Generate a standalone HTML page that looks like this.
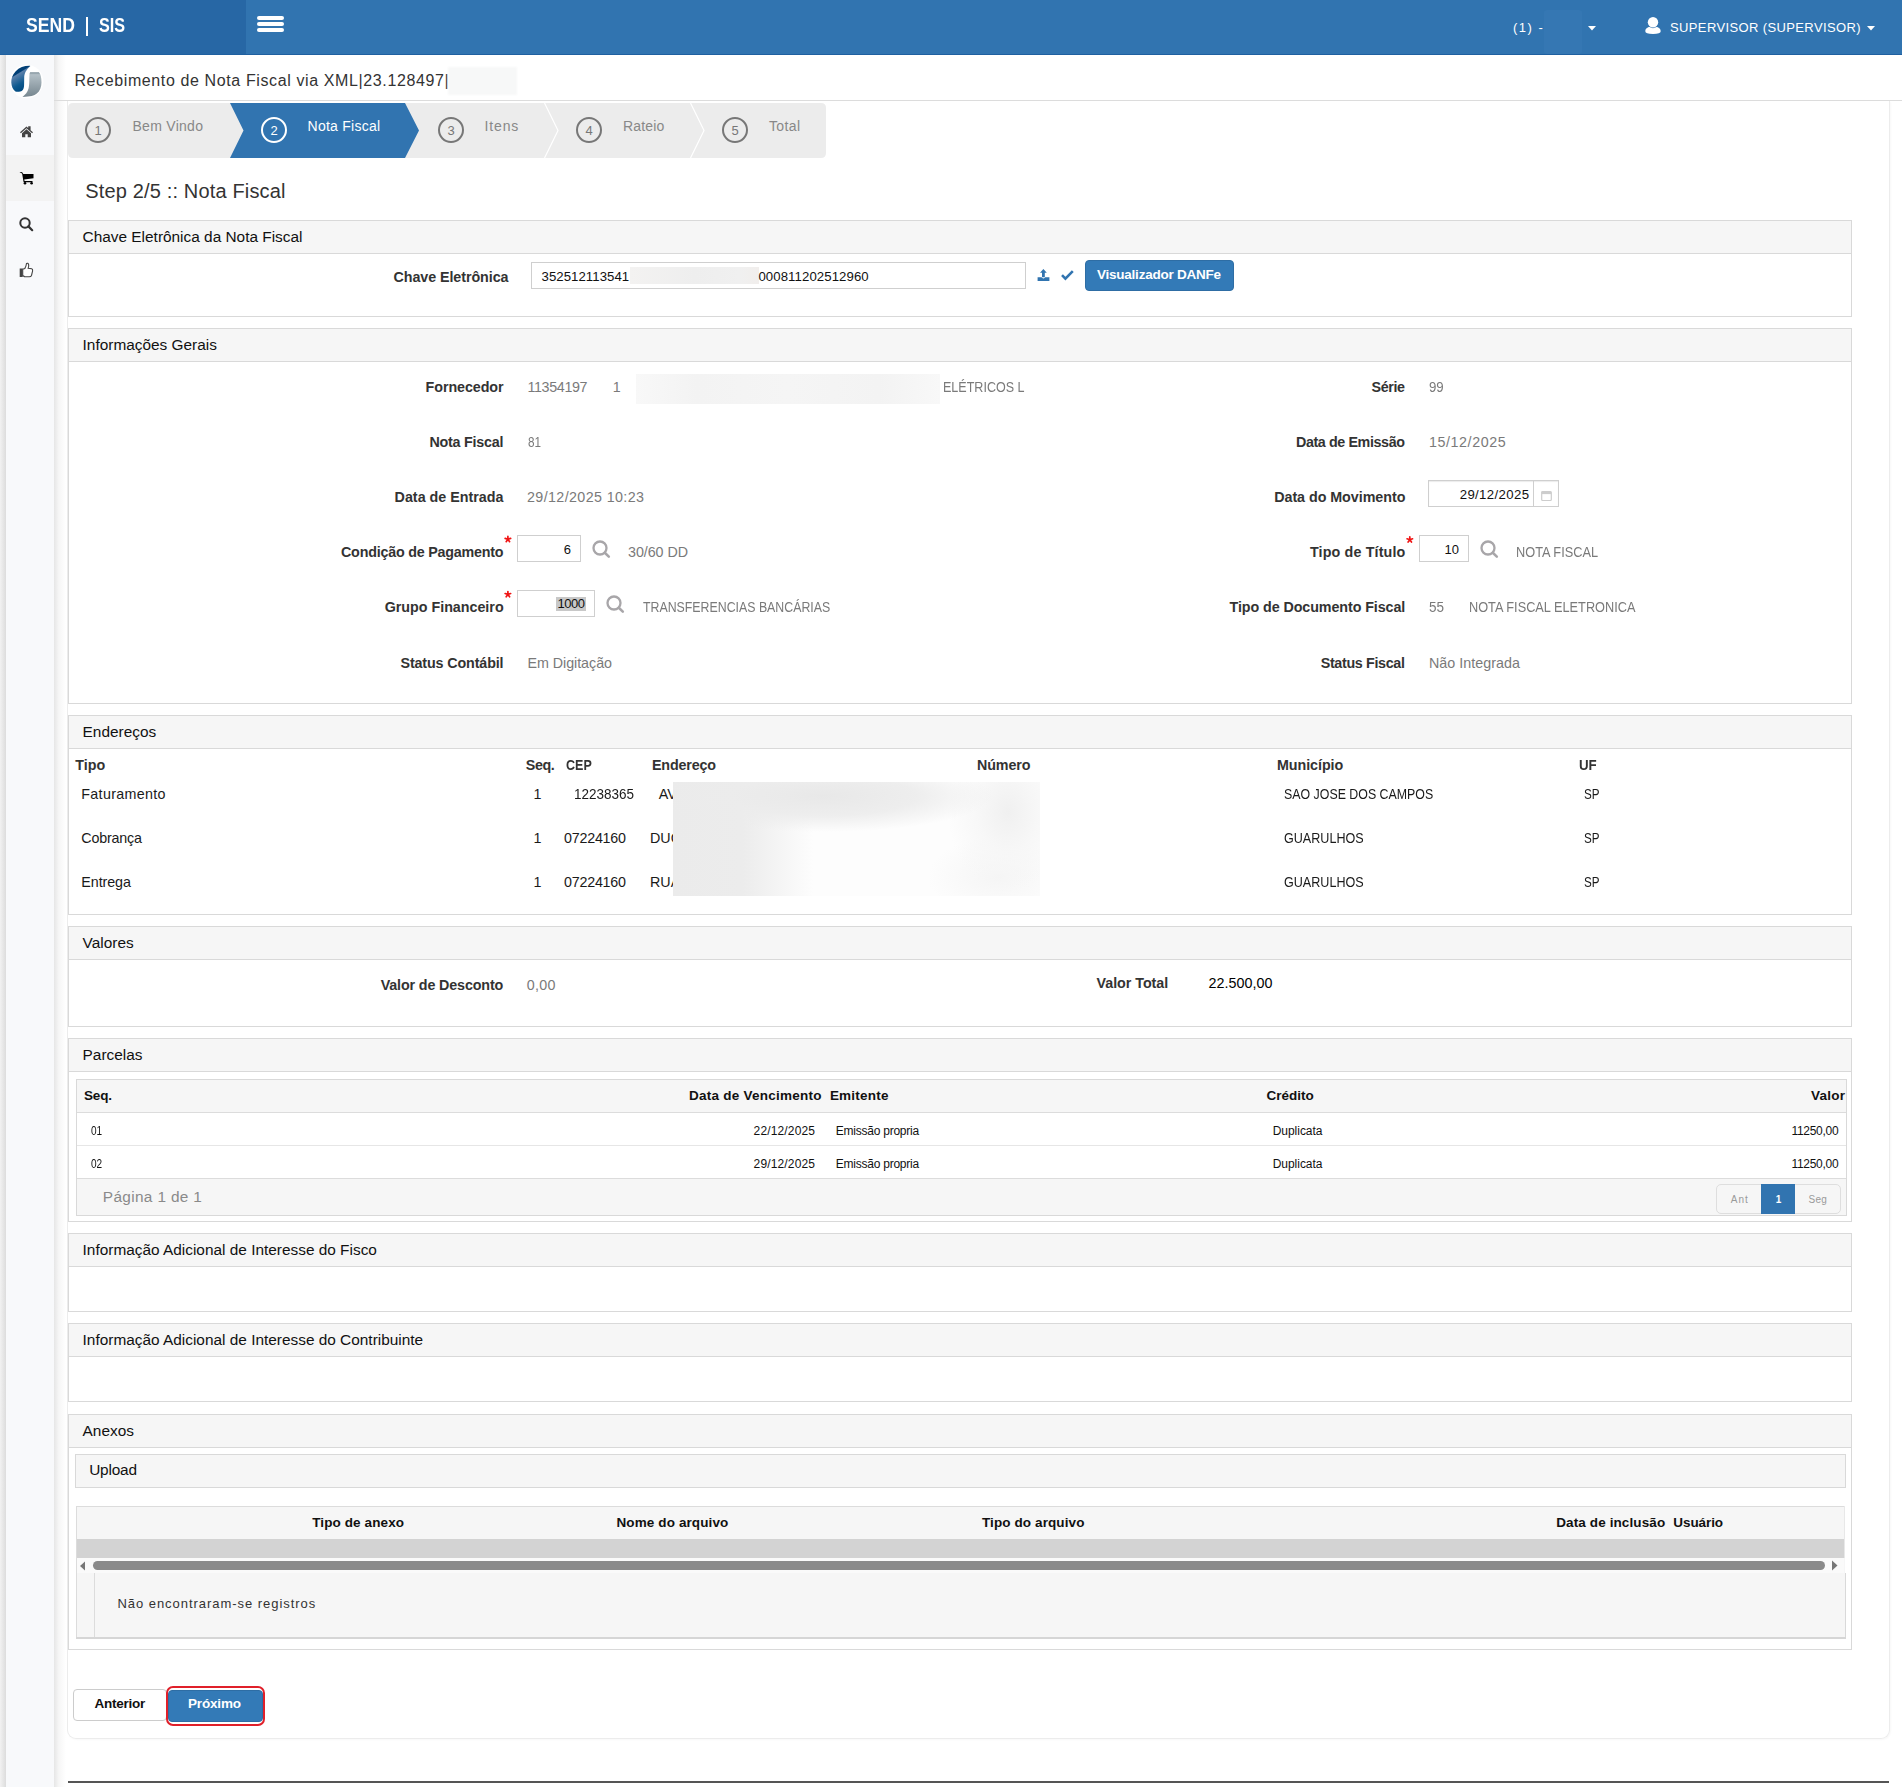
<!DOCTYPE html>
<html><head><meta charset="utf-8"><title>Recebimento de Nota Fiscal</title>
<style>
html,body{margin:0;padding:0;}
body{width:1902px;height:1787px;position:relative;overflow:hidden;background:#fff;font-family:"Liberation Sans",sans-serif;}
body div,body svg{position:absolute;}
.t{white-space:nowrap;}
</style></head><body>
<div style="left:0px;top:55px;width:6px;height:1732px;background:linear-gradient(to right,#f2f2f2,#dcdcdc);"></div>
<div style="left:6px;top:55px;width:48px;height:1732px;background:#f8f9fb;"></div>
<div style="left:6px;top:155px;width:48px;height:46px;background:#f3f3f3;"></div>
<div style="left:54px;top:55px;width:12px;height:1732px;background:linear-gradient(to right,#e6e6e6,#f6f6f6 40%,#ffffff);"></div>
<div style="left:54px;top:100px;width:1848px;height:1px;background:#dcdcdc;"></div>
<div style="left:67px;top:101px;width:1823px;height:1638px;border:1px solid #ececec;border-top:none;border-radius:0 0 9px 9px;box-sizing:border-box;box-shadow:1px 1px 2px rgba(0,0,0,0.03);"></div>
<div style="left:68px;top:1781px;width:1821px;height:2px;background:#555;"></div>
<div style="left:0px;top:0px;width:1902px;height:55px;background:#3174b0;"></div>
<div style="left:0px;top:0px;width:246px;height:55px;background:#2767a5;"></div>
<div style="left:0px;top:54px;width:1902px;height:1px;background:#1f60a0;"></div>
<div class="t" style="left:25.80px;top:14px;font-size:21px;line-height:21px;color:#fff;font-weight:bold;transform:scaleX(0.8377);transform-origin:0 0;">SEND</div>
<div style="left:85.6px;top:17px;width:2.4px;height:19px;background:#fff;"></div>
<div class="t" style="left:99.40px;top:14px;font-size:21px;line-height:21px;color:#fff;font-weight:bold;transform:scaleX(0.7705);transform-origin:0 0;">SIS</div>
<div style="left:257px;top:16px;width:27px;height:4px;background:#fff;border-radius:2px;"></div>
<div style="left:257px;top:22px;width:27px;height:4px;background:#fff;border-radius:2px;"></div>
<div style="left:257px;top:28px;width:27px;height:4px;background:#fff;border-radius:2px;"></div>
<div class="t" style="left:1513.00px;top:21px;font-size:13px;line-height:13px;color:#fff;letter-spacing:1.531px;">(1) -</div>
<div style="left:1544px;top:10px;width:38px;height:44px;background:#3577b3;border-radius:3px;"></div>
<svg style="left:1588px;top:26px" width="8" height="5"><path d="M0 0H8L4 4.5Z" fill="#fff"/></svg>
<svg style="left:1867px;top:26px" width="8" height="5"><path d="M0 0H8L4 4.5Z" fill="#fff"/></svg>
<svg style="left:1645px;top:17px" width="16" height="17"><circle cx="8" cy="5.2" r="5.2" fill="#fff"/><path d="M0.3 14.2C0.3 11.5 3 10.3 4.5 10.1Q8 12.3 11.5 10.1C13 10.3 15.7 11.5 15.7 14.2Q15.7 16.9 8 16.9Q0.3 16.9 0.3 14.2Z" fill="#fff"/></svg>
<div class="t" style="left:1670.00px;top:21px;font-size:13px;line-height:13px;color:#fff;letter-spacing:0.375px;">SUPERVISOR (SUPERVISOR)</div>
<svg style="left:6px;top:60px" width="42" height="42" viewBox="0 0 42 42">
<defs><linearGradient id="lgb" x1="0" y1="0" x2="0.45" y2="1"><stop offset="0" stop-color="#003c73"/><stop offset="0.36" stop-color="#003f76"/><stop offset="0.40" stop-color="#5b80ab"/><stop offset="0.75" stop-color="#0f5a8f"/><stop offset="1" stop-color="#004a80"/></linearGradient>
<linearGradient id="lgg" x1="0" y1="0" x2="0" y2="1"><stop offset="0" stop-color="#7a8c96"/><stop offset="0.1" stop-color="#b3bfc6"/><stop offset="1" stop-color="#76868f"/></linearGradient></defs>
<circle cx="20.6" cy="21.5" r="16.8" fill="#fff"/>
<path d="M24.4 5.9C19 5.6 13.5 7.3 9.5 11.5C6.2 15 5.2 19 5.3 22.5C5.5 26.5 6.8 29.5 9.4 31.5C11.5 32 14.5 31.8 16 30.8C17.6 29.5 18.1 27.5 18.1 24.5L18.2 17.5C18.3 13.5 19.8 10 24.4 5.9Z" fill="url(#lgb)"/>
<path d="M24.2 12.3L32.9 12.2C34.6 13.8 35.5 17.5 35.5 22.5C35.4 27 34 31 30.8 33.6C28 35.8 24.5 36.8 16.5 36.9C19.5 34.5 21.5 32 22.6 28.2C23.2 25.5 23.3 22 23.3 19.5L23.5 14.1C23.6 13.2 23.8 12.6 24.2 12.3Z" fill="url(#lgg)"/>
</svg>
<svg style="left:19px;top:125px" width="15" height="13" viewBox="0 0 15 13"><path d="M7.5 1.5L1 7.3L1.9 8.2L7.5 3.2L13.1 8.2L14 7.3L11.6 5.2V1.2H9.2V3.1Z" fill="#444"/><path d="M3 8.2L7.5 4.2L12 8.2V12.2H8.7V9.2H6.3V12.2H3Z" fill="#444"/></svg>
<svg style="left:19px;top:171px" width="15" height="14" viewBox="0 0 15 14"><path d="M0.5 1.4Q2.8 0.6 3.6 1.8L4.3 3H14.5V7.2L5.2 8.6L5.6 10H13.5V11.2H4.6L3.1 2.6Q2.2 1.6 0.5 1.4Z" fill="#000"/><circle cx="6" cy="12.3" r="1.3" fill="#000"/><circle cx="12.6" cy="12.3" r="1.3" fill="#000"/></svg>
<svg style="left:18px;top:216px" width="17" height="17" viewBox="0 0 17 17"><circle cx="7" cy="7" r="4.7" fill="none" stroke="#333" stroke-width="2"/><path d="M10.4 10.4L14.2 14.2" stroke="#333" stroke-width="2.2" stroke-linecap="round"/></svg>
<svg style="left:19px;top:262px" width="15" height="16" viewBox="0 0 15 16"><rect x="0.7" y="6.5" width="3" height="8.5" fill="#444"/><path d="M3.7 7.2L5.8 6.6Q7.2 4.2 7.5 1.5Q9 0.8 9.6 2.4Q10 4.3 9.2 6.3L12.7 6.8Q13.9 7.4 13.6 9L12.5 13.5Q12 14.8 10.2 14.8L5.5 14.6L3.7 13.6Z" fill="#fff" stroke="#444" stroke-width="1.1"/></svg>
<div class="t" style="left:74.40px;top:73px;font-size:16px;line-height:16px;color:#333;letter-spacing:0.615px;">Recebimento de Nota Fiscal via XML|23.128497|</div>
<div style="left:448px;top:67px;width:69px;height:28px;background:#f7f8f8;filter:blur(1px);"></div>
<svg style="left:68px;top:103px" width="758" height="55" viewBox="0 0 758 55">
<path d="M5 0H753Q758 0 758 5V50Q758 55 753 55H5Q0 55 0 50V5Q0 0 5 0Z" fill="#ececec"/>
<path d="M162 0H337L351 27.5L337 55H162L175.5 27.5Z" fill="#3174b0"/>
<path d="M476.5 0L490 27.5L476.5 55" fill="none" stroke="#fff" stroke-width="1.2"/>
<path d="M622.5 0L636 27.5L622.5 55" fill="none" stroke="#fff" stroke-width="1.2"/>
</svg>
<div style="left:85px;top:117px;width:26px;height:26px;border:2px solid #777;border-radius:50%;box-sizing:border-box;"></div>
<div class="t" style="left:94.38px;top:124px;font-size:13px;line-height:13px;color:#777;">1</div>
<div class="t" style="left:132.50px;top:119px;font-size:14px;line-height:14px;color:#888;letter-spacing:0.281px;">Bem Vindo</div>
<div style="left:261px;top:117px;width:26px;height:26px;border:2px solid #fff;border-radius:50%;box-sizing:border-box;"></div>
<div class="t" style="left:270.38px;top:124px;font-size:13px;line-height:13px;color:#fff;">2</div>
<div class="t" style="left:307.60px;top:119px;font-size:14px;line-height:14px;color:#fff;letter-spacing:0.240px;">Nota Fiscal</div>
<div style="left:438px;top:117px;width:26px;height:26px;border:2px solid #777;border-radius:50%;box-sizing:border-box;"></div>
<div class="t" style="left:447.38px;top:124px;font-size:13px;line-height:13px;color:#777;">3</div>
<div class="t" style="left:484.60px;top:119px;font-size:14px;line-height:14px;color:#888;letter-spacing:0.831px;">Itens</div>
<div style="left:576px;top:117px;width:26px;height:26px;border:2px solid #777;border-radius:50%;box-sizing:border-box;"></div>
<div class="t" style="left:585.38px;top:124px;font-size:13px;line-height:13px;color:#777;">4</div>
<div class="t" style="left:623.00px;top:119px;font-size:14px;line-height:14px;color:#888;letter-spacing:0.140px;">Rateio</div>
<div style="left:722px;top:117px;width:26px;height:26px;border:2px solid #777;border-radius:50%;box-sizing:border-box;"></div>
<div class="t" style="left:731.38px;top:124px;font-size:13px;line-height:13px;color:#777;">5</div>
<div class="t" style="left:769.00px;top:119px;font-size:14px;line-height:14px;color:#888;letter-spacing:0.369px;">Total</div>
<div class="t" style="left:85.20px;top:181px;font-size:20px;line-height:20px;color:#333;letter-spacing:0.161px;">Step 2/5 :: Nota Fiscal</div>
<div style="left:68px;top:220px;width:1784px;height:97px;border:1px solid #d9d9d9;box-sizing:border-box;background:#fff;"></div>
<div style="left:69px;top:221px;width:1782px;height:32px;background:#f6f6f6;border-bottom:1px solid #d9d9d9;"></div>
<div class="t" style="left:82.60px;top:229px;font-size:15.4px;line-height:15.4px;color:#111;">Chave Eletrônica da Nota Fiscal</div>
<div style="left:68px;top:328px;width:1784px;height:376px;border:1px solid #d9d9d9;box-sizing:border-box;background:#fff;"></div>
<div style="left:69px;top:329px;width:1782px;height:32px;background:#f6f6f6;border-bottom:1px solid #d9d9d9;"></div>
<div class="t" style="left:82.60px;top:337px;font-size:15.4px;line-height:15.4px;color:#111;">Informações Gerais</div>
<div style="left:68px;top:715px;width:1784px;height:200px;border:1px solid #d9d9d9;box-sizing:border-box;background:#fff;"></div>
<div style="left:69px;top:716px;width:1782px;height:32px;background:#f6f6f6;border-bottom:1px solid #d9d9d9;"></div>
<div class="t" style="left:82.60px;top:724px;font-size:15.4px;line-height:15.4px;color:#111;">Endereços</div>
<div style="left:68px;top:926px;width:1784px;height:101px;border:1px solid #d9d9d9;box-sizing:border-box;background:#fff;"></div>
<div style="left:69px;top:927px;width:1782px;height:32px;background:#f6f6f6;border-bottom:1px solid #d9d9d9;"></div>
<div class="t" style="left:82.60px;top:935px;font-size:15.4px;line-height:15.4px;color:#111;">Valores</div>
<div style="left:68px;top:1038px;width:1784px;height:184px;border:1px solid #d9d9d9;box-sizing:border-box;background:#fff;"></div>
<div style="left:69px;top:1039px;width:1782px;height:32px;background:#f6f6f6;border-bottom:1px solid #d9d9d9;"></div>
<div class="t" style="left:82.60px;top:1047px;font-size:15.4px;line-height:15.4px;color:#111;">Parcelas</div>
<div style="left:68px;top:1233px;width:1784px;height:79px;border:1px solid #d9d9d9;box-sizing:border-box;background:#fff;"></div>
<div style="left:69px;top:1234px;width:1782px;height:32px;background:#f6f6f6;border-bottom:1px solid #d9d9d9;"></div>
<div class="t" style="left:82.60px;top:1242px;font-size:15.4px;line-height:15.4px;color:#111;">Informação Adicional de Interesse do Fisco</div>
<div style="left:68px;top:1323px;width:1784px;height:79px;border:1px solid #d9d9d9;box-sizing:border-box;background:#fff;"></div>
<div style="left:69px;top:1324px;width:1782px;height:32px;background:#f6f6f6;border-bottom:1px solid #d9d9d9;"></div>
<div class="t" style="left:82.60px;top:1332px;font-size:15.4px;line-height:15.4px;color:#111;">Informação Adicional de Interesse do Contribuinte</div>
<div style="left:68px;top:1414px;width:1784px;height:236px;border:1px solid #d9d9d9;box-sizing:border-box;background:#fff;"></div>
<div style="left:69px;top:1415px;width:1782px;height:32px;background:#f6f6f6;border-bottom:1px solid #d9d9d9;"></div>
<div class="t" style="left:82.60px;top:1423px;font-size:15.4px;line-height:15.4px;color:#111;">Anexos</div>
<div class="t" style="left:393.50px;top:270px;font-size:14.3px;line-height:14.3px;color:#333;font-weight:bold;letter-spacing:-0.070px;">Chave Eletrônica</div>
<div style="left:531px;top:262px;width:495px;height:27px;border:1px solid #cfcfcf;box-sizing:border-box;background:#fff;"></div>
<div class="t" style="left:541.50px;top:270px;font-size:13.2px;line-height:13.2px;color:#111;letter-spacing:0.061px;">352512113541</div>
<div style="left:630px;top:267px;width:129px;height:17px;background:linear-gradient(to right,#f3f2f1,#eeeeee 50%,#f0f0f0 85%,#f1eeec);"></div>
<div class="t" style="left:758.40px;top:270px;font-size:13.2px;line-height:13.2px;color:#111;letter-spacing:0.091px;">000811202512960</div>
<svg style="left:1037px;top:268px" width="13" height="14" viewBox="0 0 13 14"><path d="M6.4 1L9.8 4.8H7.8V9.2H5V4.8H3Z" fill="#3174b0"/><path d="M0.6 9.3H4.6Q5 10.4 6.4 10.4Q7.8 10.4 8.2 9.3H12.4V12.9H0.6Z" fill="#3174b0"/></svg>
<svg style="left:1061px;top:270px" width="13" height="11" viewBox="0 0 13 11"><path d="M1 5.2L4.4 8.6L11.8 1.2" fill="none" stroke="#3174b0" stroke-width="2.6"/></svg>
<div style="left:1085px;top:260px;width:149px;height:31px;background:#337ab7;border:1px solid #2e6da4;border-radius:4px;box-sizing:border-box;"></div>
<div class="t" style="left:1097.00px;top:268px;font-size:13.5px;line-height:13.5px;color:#fff;font-weight:bold;letter-spacing:-0.235px;">Visualizador DANFe</div>
<div class="t" style="left:425.60px;top:380px;font-size:14.3px;line-height:14.3px;color:#333;font-weight:bold;letter-spacing:-0.081px;">Fornecedor</div>
<div class="t" style="left:527.50px;top:380px;font-size:14.3px;line-height:14.3px;color:#7a7a7a;letter-spacing:-0.361px;">11354197</div>
<div class="t" style="left:612.80px;top:380px;font-size:14.3px;line-height:14.3px;color:#7a7a7a;">1</div>
<div style="left:636px;top:374px;width:304px;height:30px;background:linear-gradient(to right,#f8f8f8,#f3f3f3 20%,#f5f5f5 50%,#f3f3f3 80%,#f8f8f8);"></div>
<div class="t" style="left:942.70px;top:380px;font-size:14.3px;line-height:14.3px;color:#7a7a7a;transform:scaleX(0.8774);transform-origin:0 0;">ELÉTRICOS L</div>
<div class="t" style="left:1371.50px;top:380px;font-size:14.3px;line-height:14.3px;color:#333;font-weight:bold;letter-spacing:-0.375px;">Série</div>
<div class="t" style="left:1429.30px;top:380px;font-size:14.3px;line-height:14.3px;color:#7a7a7a;transform:scaleX(0.9260);transform-origin:0 0;">99</div>
<div class="t" style="left:429.40px;top:435px;font-size:14.3px;line-height:14.3px;color:#333;font-weight:bold;letter-spacing:-0.215px;">Nota Fiscal</div>
<div class="t" style="left:527.50px;top:435px;font-size:14.3px;line-height:14.3px;color:#7a7a7a;transform:scaleX(0.8189);transform-origin:0 0;">81</div>
<div class="t" style="left:1296.00px;top:435px;font-size:14.3px;line-height:14.3px;color:#333;font-weight:bold;letter-spacing:-0.393px;">Data de Emissão</div>
<div class="t" style="left:1429.00px;top:435px;font-size:14.3px;line-height:14.3px;color:#7a7a7a;letter-spacing:0.564px;">15/12/2025</div>
<div class="t" style="left:394.60px;top:490px;font-size:14.3px;line-height:14.3px;color:#333;font-weight:bold;">Data de Entrada</div>
<div class="t" style="left:527.00px;top:490px;font-size:14.3px;line-height:14.3px;color:#7a7a7a;letter-spacing:0.375px;">29/12/2025 10:23</div>
<div class="t" style="left:1274.20px;top:490px;font-size:14.3px;line-height:14.3px;color:#333;font-weight:bold;letter-spacing:-0.042px;">Data do Movimento</div>
<div style="left:1428px;top:480px;width:131px;height:27px;border:1px solid #cfcfcf;box-sizing:border-box;background:#fff;box-shadow:inset 0 1px 1px rgba(0,0,0,0.08);"></div>
<div style="left:1533px;top:480px;width:1px;height:27px;background:#cfcfcf;"></div>
<div class="t" style="left:1459.70px;top:488px;font-size:13.2px;line-height:13.2px;color:#111;letter-spacing:0.367px;">29/12/2025</div>
<svg style="left:1541px;top:490px" width="11" height="11" viewBox="0 0 11 11"><rect x="0.7" y="1.5" width="9.6" height="9" rx="1" fill="none" stroke="#cdcdcd" stroke-width="1.2"/><rect x="0.7" y="1.5" width="9.6" height="2.6" fill="#cdcdcd"/></svg>
<div class="t" style="left:341.00px;top:545px;font-size:14.3px;line-height:14.3px;color:#333;font-weight:bold;letter-spacing:-0.214px;">Condição de Pagamento</div>
<svg style="left:0;top:0;overflow:visible" width="1" height="1"><path d="M507.90 539.30L507.90 536.40M507.90 539.30L510.66 538.40M507.90 539.30L509.60 541.65M507.90 539.30L506.20 541.65M507.90 539.30L505.14 538.40" stroke="#f01414" stroke-width="1.7" stroke-linecap="round"/></svg>
<div style="left:517px;top:535px;width:64px;height:27px;border:1px solid #cfcfcf;box-sizing:border-box;background:#fff;"></div>
<div class="t" style="left:563.75px;top:543px;font-size:13px;line-height:13px;color:#111;">6</div>
<svg style="left:592px;top:540px" width="19" height="19" viewBox="0 0 19 19"><circle cx="8" cy="8" r="6.5" fill="none" stroke="#a8a6a9" stroke-width="2.3"/><path d="M12.8 12.8L16.8 16.6" stroke="#a8a6a9" stroke-width="2.6" stroke-linecap="round"/></svg>
<div class="t" style="left:628.00px;top:545px;font-size:14.3px;line-height:14.3px;color:#7a7a7a;letter-spacing:-0.054px;">30/60 DD</div>
<div class="t" style="left:1310.00px;top:545px;font-size:14.3px;line-height:14.3px;color:#333;font-weight:bold;letter-spacing:0.146px;">Tipo de Título</div>
<svg style="left:0;top:0;overflow:visible" width="1" height="1"><path d="M1409.80 539.70L1409.80 536.80M1409.80 539.70L1412.56 538.80M1409.80 539.70L1411.50 542.05M1409.80 539.70L1408.10 542.05M1409.80 539.70L1407.04 538.80" stroke="#f01414" stroke-width="1.7" stroke-linecap="round"/></svg>
<div style="left:1419px;top:535px;width:50px;height:27px;border:1px solid #cfcfcf;box-sizing:border-box;background:#fff;"></div>
<div class="t" style="left:1444.50px;top:543px;font-size:13px;line-height:13px;color:#111;">10</div>
<svg style="left:1480px;top:540px" width="19" height="19" viewBox="0 0 19 19"><circle cx="8" cy="8" r="6.5" fill="none" stroke="#a8a6a9" stroke-width="2.3"/><path d="M12.8 12.8L16.8 16.6" stroke="#a8a6a9" stroke-width="2.6" stroke-linecap="round"/></svg>
<div class="t" style="left:1516.00px;top:545px;font-size:14.3px;line-height:14.3px;color:#7a7a7a;transform:scaleX(0.8925);transform-origin:0 0;">NOTA FISCAL</div>
<div class="t" style="left:384.70px;top:600px;font-size:14.3px;line-height:14.3px;color:#333;font-weight:bold;letter-spacing:-0.015px;">Grupo Financeiro</div>
<svg style="left:0;top:0;overflow:visible" width="1" height="1"><path d="M507.90 594.40L507.90 591.50M507.90 594.40L510.66 593.50M507.90 594.40L509.60 596.75M507.90 594.40L506.20 596.75M507.90 594.40L505.14 593.50" stroke="#f01414" stroke-width="1.7" stroke-linecap="round"/></svg>
<div style="left:517px;top:590px;width:78px;height:27px;border:1px solid #cfcfcf;box-sizing:border-box;background:#fff;"></div>
<div style="left:556px;top:597px;width:30px;height:14px;background:#c8c8c8;"></div>
<div class="t" style="left:557.50px;top:597px;font-size:13px;line-height:13px;color:#111;letter-spacing:-0.458px;">1000</div>
<svg style="left:606px;top:595px" width="19" height="19" viewBox="0 0 19 19"><circle cx="8" cy="8" r="6.5" fill="none" stroke="#a8a6a9" stroke-width="2.3"/><path d="M12.8 12.8L16.8 16.6" stroke="#a8a6a9" stroke-width="2.6" stroke-linecap="round"/></svg>
<div class="t" style="left:642.50px;top:600px;font-size:14.3px;line-height:14.3px;color:#7a7a7a;transform:scaleX(0.8632);transform-origin:0 0;">TRANSFERENCIAS BANCÁRIAS</div>
<div class="t" style="left:1229.50px;top:600px;font-size:14.3px;line-height:14.3px;color:#333;font-weight:bold;letter-spacing:-0.080px;">Tipo de Documento Fiscal</div>
<div class="t" style="left:1429.00px;top:600px;font-size:14.3px;line-height:14.3px;color:#7a7a7a;transform:scaleX(0.9449);transform-origin:0 0;">55</div>
<div class="t" style="left:1469.00px;top:600px;font-size:14.3px;line-height:14.3px;color:#7a7a7a;transform:scaleX(0.8916);transform-origin:0 0;">NOTA FISCAL ELETRONICA</div>
<div class="t" style="left:400.50px;top:656px;font-size:14.3px;line-height:14.3px;color:#333;font-weight:bold;letter-spacing:-0.127px;">Status Contábil</div>
<div class="t" style="left:527.40px;top:656px;font-size:14.3px;line-height:14.3px;color:#7a7a7a;letter-spacing:-0.036px;">Em Digitação</div>
<div class="t" style="left:1320.70px;top:656px;font-size:14.3px;line-height:14.3px;color:#333;font-weight:bold;letter-spacing:-0.329px;">Status Fiscal</div>
<div class="t" style="left:1429.00px;top:656px;font-size:14.3px;line-height:14.3px;color:#7a7a7a;letter-spacing:0.031px;">Não Integrada</div>
<div class="t" style="left:75.30px;top:758px;font-size:14.3px;line-height:14.3px;color:#333;font-weight:bold;">Tipo</div>
<div class="t" style="left:525.80px;top:758px;font-size:14.3px;line-height:14.3px;color:#333;font-weight:bold;letter-spacing:-0.417px;">Seq.</div>
<div class="t" style="left:566.30px;top:758px;font-size:14.3px;line-height:14.3px;color:#333;font-weight:bold;transform:scaleX(0.8749);transform-origin:0 0;">CEP</div>
<div class="t" style="left:652.00px;top:758px;font-size:14.3px;line-height:14.3px;color:#333;font-weight:bold;letter-spacing:-0.161px;">Endereço</div>
<div class="t" style="left:977.00px;top:758px;font-size:14.3px;line-height:14.3px;color:#333;font-weight:bold;letter-spacing:-0.100px;">Número</div>
<div class="t" style="left:1277.00px;top:758px;font-size:14.3px;line-height:14.3px;color:#333;font-weight:bold;letter-spacing:-0.056px;">Município</div>
<div class="t" style="left:1578.50px;top:758px;font-size:14.3px;line-height:14.3px;color:#333;font-weight:bold;transform:scaleX(0.9316);transform-origin:0 0;">UF</div>
<div class="t" style="left:81.30px;top:787px;font-size:14.3px;line-height:14.3px;color:#1a1a1a;letter-spacing:0.308px;">Faturamento</div>
<div class="t" style="left:533.50px;top:787px;font-size:14.3px;line-height:14.3px;color:#1a1a1a;">1</div>
<div class="t" style="left:574.00px;top:787px;font-size:14.3px;line-height:14.3px;color:#1a1a1a;transform:scaleX(0.9430);transform-origin:0 0;">12238365</div>
<div class="t" style="left:658.70px;top:787px;font-size:14.3px;line-height:14.3px;color:#1a1a1a;">AV</div>
<div class="t" style="left:1283.80px;top:787px;font-size:14.3px;line-height:14.3px;color:#1a1a1a;transform:scaleX(0.8656);transform-origin:0 0;">SAO JOSE DOS CAMPOS</div>
<div class="t" style="left:1584.00px;top:787px;font-size:14.3px;line-height:14.3px;color:#1a1a1a;transform:scaleX(0.8157);transform-origin:0 0;">SP</div>
<div class="t" style="left:81.30px;top:831px;font-size:14.3px;line-height:14.3px;color:#1a1a1a;letter-spacing:-0.186px;">Cobrança</div>
<div class="t" style="left:533.50px;top:831px;font-size:14.3px;line-height:14.3px;color:#1a1a1a;">1</div>
<div class="t" style="left:564.00px;top:831px;font-size:14.3px;line-height:14.3px;color:#1a1a1a;letter-spacing:-0.232px;">07224160</div>
<div class="t" style="left:650.00px;top:831px;font-size:14.3px;line-height:14.3px;color:#1a1a1a;">DUC</div>
<div class="t" style="left:1283.80px;top:831px;font-size:14.3px;line-height:14.3px;color:#1a1a1a;transform:scaleX(0.8794);transform-origin:0 0;">GUARULHOS</div>
<div class="t" style="left:1584.00px;top:831px;font-size:14.3px;line-height:14.3px;color:#1a1a1a;transform:scaleX(0.8157);transform-origin:0 0;">SP</div>
<div class="t" style="left:81.30px;top:875px;font-size:14.3px;line-height:14.3px;color:#1a1a1a;letter-spacing:-0.071px;">Entrega</div>
<div class="t" style="left:533.50px;top:875px;font-size:14.3px;line-height:14.3px;color:#1a1a1a;">1</div>
<div class="t" style="left:564.00px;top:875px;font-size:14.3px;line-height:14.3px;color:#1a1a1a;letter-spacing:-0.232px;">07224160</div>
<div class="t" style="left:650.00px;top:875px;font-size:14.3px;line-height:14.3px;color:#1a1a1a;">RUA</div>
<div class="t" style="left:1283.80px;top:875px;font-size:14.3px;line-height:14.3px;color:#1a1a1a;transform:scaleX(0.8794);transform-origin:0 0;">GUARULHOS</div>
<div class="t" style="left:1584.00px;top:875px;font-size:14.3px;line-height:14.3px;color:#1a1a1a;transform:scaleX(0.8157);transform-origin:0 0;">SP</div>
<div style="left:673px;top:782px;width:367px;height:114px;background:radial-gradient(ellipse 170px 36px at 150px 14px,rgba(232,232,232,1) 0%,rgba(236,236,236,0.9) 55%,rgba(255,255,255,0) 100%),radial-gradient(ellipse 60px 80px at 335px 30px,rgba(240,240,240,1) 0%,rgba(246,246,246,0.8) 50%,rgba(255,255,255,0) 100%),radial-gradient(ellipse 70px 40px at 325px 95px,rgba(245,245,245,1) 0%,rgba(255,255,255,0) 100%),linear-gradient(to right,#ebebeb 0px,#ececec 70px,rgba(255,255,255,0) 140px),#fdfdfd;"></div>
<div class="t" style="left:380.70px;top:978px;font-size:14.3px;line-height:14.3px;color:#333;font-weight:bold;letter-spacing:-0.134px;">Valor de Desconto</div>
<div class="t" style="left:526.80px;top:978px;font-size:14.3px;line-height:14.3px;color:#7a7a7a;letter-spacing:0.242px;">0,00</div>
<div class="t" style="left:1096.50px;top:976px;font-size:14.3px;line-height:14.3px;color:#333;font-weight:bold;letter-spacing:-0.030px;">Valor Total</div>
<div class="t" style="left:1208.60px;top:976px;font-size:14.3px;line-height:14.3px;color:#000;letter-spacing:0.034px;">22.500,00</div>
<div style="left:76px;top:1079px;width:1771px;height:137px;border:1px solid #d9d9d9;box-sizing:border-box;background:#fff;"></div>
<div style="left:77px;top:1080px;width:1769px;height:32px;background:#f6f6f6;"></div>
<div style="left:77px;top:1112px;width:1769px;height:1px;background:#dcdcdc;"></div>
<div style="left:77px;top:1145px;width:1769px;height:1px;background:#e6e6e6;"></div>
<div style="left:77px;top:1178px;width:1769px;height:1px;background:#dcdcdc;"></div>
<div style="left:77px;top:1179px;width:1769px;height:36px;background:#f6f6f6;"></div>
<div class="t" style="left:84.00px;top:1089px;font-size:13.5px;line-height:13.5px;color:#111;font-weight:bold;letter-spacing:-0.167px;">Seq.</div>
<div class="t" style="left:689.00px;top:1089px;font-size:13.5px;line-height:13.5px;color:#111;font-weight:bold;letter-spacing:0.244px;">Data de Vencimento</div>
<div class="t" style="left:829.90px;top:1089px;font-size:13.5px;line-height:13.5px;color:#111;font-weight:bold;letter-spacing:0.229px;">Emitente</div>
<div class="t" style="left:1266.40px;top:1089px;font-size:13.5px;line-height:13.5px;color:#111;font-weight:bold;">Crédito</div>
<div class="t" style="left:1811.00px;top:1089px;font-size:13.5px;line-height:13.5px;color:#111;font-weight:bold;letter-spacing:0.250px;">Valor</div>
<div class="t" style="left:90.50px;top:1125px;font-size:12px;line-height:12px;color:#111;transform:scaleX(0.8374);transform-origin:0 0;">01</div>
<div class="t" style="left:753.60px;top:1125px;font-size:12px;line-height:12px;color:#111;letter-spacing:0.144px;">22/12/2025</div>
<div class="t" style="left:835.80px;top:1125px;font-size:12px;line-height:12px;color:#111;letter-spacing:-0.239px;">Emissão propria</div>
<div class="t" style="left:1272.70px;top:1125px;font-size:12px;line-height:12px;color:#111;letter-spacing:-0.028px;">Duplicata</div>
<div class="t" style="left:1791.40px;top:1125px;font-size:12px;line-height:12px;color:#111;letter-spacing:-0.275px;">11250,00</div>
<div class="t" style="left:90.50px;top:1158px;font-size:12px;line-height:12px;color:#111;transform:scaleX(0.8374);transform-origin:0 0;">02</div>
<div class="t" style="left:753.60px;top:1158px;font-size:12px;line-height:12px;color:#111;letter-spacing:0.144px;">29/12/2025</div>
<div class="t" style="left:835.80px;top:1158px;font-size:12px;line-height:12px;color:#111;letter-spacing:-0.239px;">Emissão propria</div>
<div class="t" style="left:1272.70px;top:1158px;font-size:12px;line-height:12px;color:#111;letter-spacing:-0.028px;">Duplicata</div>
<div class="t" style="left:1791.40px;top:1158px;font-size:12px;line-height:12px;color:#111;letter-spacing:-0.275px;">11250,00</div>
<div class="t" style="left:102.80px;top:1189px;font-size:15.4px;line-height:15.4px;color:#8a8a8a;letter-spacing:0.342px;">Página 1 de 1</div>
<div style="left:1716px;top:1184px;width:125px;height:30px;border:1px solid #dedede;border-radius:5px;box-sizing:border-box;background:#f6f6f6;"></div>
<div style="left:1761px;top:1184px;width:34px;height:30px;background:#3174b0;"></div>
<div class="t" style="left:1730.70px;top:1195px;font-size:10px;line-height:10px;color:#9a9a9a;letter-spacing:1.050px;">Ant</div>
<div class="t" style="left:1775.70px;top:1195px;font-size:10px;line-height:10px;color:#fff;font-weight:bold;">1</div>
<div class="t" style="left:1808.50px;top:1195px;font-size:10px;line-height:10px;color:#9a9a9a;letter-spacing:0.275px;">Seg</div>
<div style="left:75px;top:1454px;width:1771px;height:34px;border:1px solid #d9d9d9;box-sizing:border-box;background:#f6f6f6;"></div>
<div class="t" style="left:89.20px;top:1462px;font-size:15.4px;line-height:15.4px;color:#111;letter-spacing:-0.190px;">Upload</div>
<div style="left:76px;top:1506px;width:1769px;height:132px;border:1px solid #dcdcdc;border-right:none;box-sizing:border-box;background:#f6f6f6;"></div>
<div style="left:1844px;top:1506px;width:1px;height:52px;background:#e8e8e8;"></div>
<div style="left:77px;top:1539px;width:1767px;height:19px;background:#d3d3d3;"></div>
<div style="left:77px;top:1558px;width:1767px;height:15px;background:#fafafa;"></div>
<svg style="left:79px;top:1561px" width="8" height="10"><path d="M6 0.5V9.5L1 5Z" fill="#777"/></svg>
<svg style="left:1831px;top:1560px" width="8" height="11"><path d="M1 0.5V10.5L6.5 5.5Z" fill="#777"/></svg>
<div style="left:93px;top:1561px;width:1732px;height:9px;background:#8a8a8a;border-radius:5px;"></div>
<div style="left:94px;top:1573px;width:1px;height:64px;background:#dcdcdc;"></div>
<div style="left:1845px;top:1573px;width:1px;height:65px;background:#d9d9d9;"></div>
<div style="left:76px;top:1637px;width:1770px;height:2px;background:#d6d6d6;"></div>
<div class="t" style="left:312.20px;top:1516px;font-size:13.5px;line-height:13.5px;color:#111;font-weight:bold;letter-spacing:0.108px;">Tipo de anexo</div>
<div class="t" style="left:616.50px;top:1516px;font-size:13.5px;line-height:13.5px;color:#111;font-weight:bold;letter-spacing:0.111px;">Nome do arquivo</div>
<div class="t" style="left:982.00px;top:1516px;font-size:13.5px;line-height:13.5px;color:#111;font-weight:bold;letter-spacing:0.100px;">Tipo do arquivo</div>
<div class="t" style="left:1556.20px;top:1516px;font-size:13.5px;line-height:13.5px;color:#111;font-weight:bold;letter-spacing:0.117px;">Data de inclusão</div>
<div class="t" style="left:1673.30px;top:1516px;font-size:13.5px;line-height:13.5px;color:#111;font-weight:bold;letter-spacing:-0.075px;">Usuário</div>
<div class="t" style="left:117.40px;top:1597px;font-size:13px;line-height:13px;color:#333;letter-spacing:0.959px;">Não encontraram-se registros</div>
<div style="left:73px;top:1689px;width:94px;height:32px;border:1px solid #cccccc;border-radius:4px;box-sizing:border-box;background:#fff;"></div>
<div class="t" style="left:94.50px;top:1697px;font-size:13.5px;line-height:13.5px;color:#111;font-weight:bold;letter-spacing:-0.257px;">Anterior</div>
<div style="left:166px;top:1686px;width:99px;height:40px;border:2px solid #e0202a;border-radius:7px;box-sizing:border-box;"></div>
<div style="left:168px;top:1690px;width:95px;height:32px;background:#337ab7;border:1px solid #2e6da4;border-radius:4px;box-sizing:border-box;"></div>
<div class="t" style="left:188.00px;top:1697px;font-size:13.5px;line-height:13.5px;color:#fff;font-weight:bold;letter-spacing:-0.167px;">Próximo</div>
</body></html>
